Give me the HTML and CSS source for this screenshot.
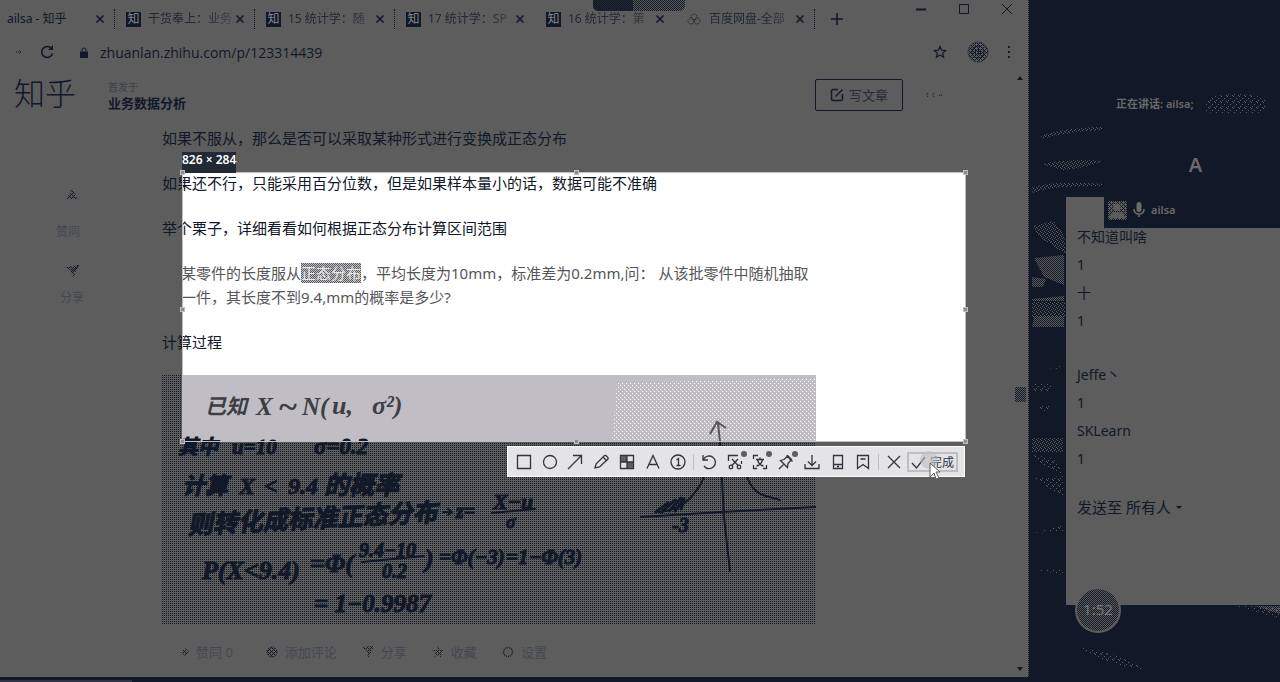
FILE: index.html
```html
<!DOCTYPE html>
<html lang="zh-CN">
<head>
<meta charset="utf-8">
<title>业务数据分析 - 知乎</title>
<link rel="stylesheet" href="styles.css">
</head>
<body class="desktop">
<svg class="defs" width="0" height="0" aria-hidden="true">
  <defs>
    <pattern id="grain" width="4" height="4" patternUnits="userSpaceOnUse"><path fill="#111827" d="M0 0h1v1H0zM2 0h1v1H2zM1 1h1v1H1zM0 2h1v1H0zM2 2h1v1H2zM3 3h1v1H3z"/></pattern>
    <pattern id="grainLight" width="4" height="4" patternUnits="userSpaceOnUse"><path fill="#111827" d="M0 0h1v1H0zM2 0h1v1H2zM0 2h1v1H0zM2 2h1v1H2z"/></pattern>
    <pattern id="spark" width="4" height="4" patternUnits="userSpaceOnUse"><path fill="#5d5d5d" d="M0 0h1v1H0zM2 1h1v1H2zM1 2h1v1H1zM3 3h1v1H3z"/></pattern>
    <pattern id="sparkThin" width="6" height="6" patternUnits="userSpaceOnUse"><path fill="#5d5d5d" d="M0 0h1v1H0zM3 2h1v1H3zM1 4h1v1H1zM5 5h1v1H5z"/></pattern>
    <pattern id="sparkDense" width="2" height="2" patternUnits="userSpaceOnUse"><path fill="#5d5d5d" d="M0 0h1v1H0zM1 1h1v1H1z"/></pattern>
    <pattern id="snow" width="4" height="4" patternUnits="userSpaceOnUse"><path fill="#fff" d="M0 0h1v1H0zM2 2h1v1H2z"/></pattern>
    <symbol id="cross" viewBox="0 0 10 10"><path d="M1.500 1.500l7 7M8.500 1.500l-7 7" stroke="currentColor" stroke-width="1.600"/></symbol>
  </defs>
</svg>
<div class="screen">
  <div class="browser">
    <div class="meeting-pill" aria-hidden="true"></div>
    <div class="tabstrip">
      <div class="tabs">
        <div class="tab tab-first"><span class="tab-title">ailsa - 知乎</span><button class="close" aria-label="关闭"><svg width="10" height="10"><use href="#cross"/></svg></button></div>
        <div class="tab"><span class="favicon">知</span><span class="tab-title faded">干货奉上：业务</span><button class="close" aria-label="关闭"><svg width="10" height="10"><use href="#cross"/></svg></button></div>
        <div class="tab"><span class="favicon">知</span><span class="tab-title faded">15 统计学：随</span><button class="close" aria-label="关闭"><svg width="10" height="10"><use href="#cross"/></svg></button></div>
        <div class="tab plain"><span class="favicon">知</span><span class="tab-title faded">17 统计学：SP</span><button class="close" aria-label="关闭"><svg width="10" height="10"><use href="#cross"/></svg></button></div>
        <div class="tab plain"><span class="favicon">知</span><span class="tab-title faded">16 统计学：第</span><button class="close" aria-label="关闭"><svg width="10" height="10"><use href="#cross"/></svg></button></div>
        <div class="tab"><svg class="cloud" width="16" height="14" viewBox="0 0 16 14" fill="none" stroke="#111827" stroke-dasharray="1 1"><circle cx="8" cy="5" r="3"/><circle cx="5" cy="9" r="3"/><circle cx="11" cy="9" r="3"/></svg><span class="tab-title faded">百度网盘-全部</span><button class="close" aria-label="关闭"><svg width="10" height="10"><use href="#cross"/></svg></button></div>
        <button class="new-tab" aria-label="新标签页"><svg width="14" height="14" viewBox="0 0 14 14"><path d="M7 1v12M1 7h12" stroke="#111827" stroke-width="1.600"/></svg></button>
      </div>
      <div class="window-buttons">
        <button aria-label="最小化"><svg width="12" height="12" viewBox="0 0 12 12"><path d="M1 6.500h10" stroke="#111827" stroke-width="2"/></svg></button>
        <button aria-label="最大化"><svg width="12" height="12" viewBox="0 0 12 12"><path d="M1.500 1.500h9v9h-9z" fill="none" stroke="#111827"/></svg></button>
        <button aria-label="关闭窗口"><svg width="12" height="12" viewBox="0 0 12 12"><path d="M1 1l10 10M11 1L1 11" stroke="#111827"/></svg></button>
      </div>
    </div>
    <div class="addressbar">
      <button class="forward" aria-label="前进"><svg width="8" height="8" viewBox="0 0 8 8"><path d="M1 4h6M4 2l2 2-2 2" fill="none" stroke="#111827" stroke-dasharray="1 1"/></svg></button>
      <button class="reload" aria-label="重新加载"><svg width="14" height="14" viewBox="0 0 14 14"><path d="M11.500 3.500A5.500 5.500 0 1 0 12.500 8.500" fill="none" stroke="#111827" stroke-width="1.600"/><path d="M13 0v5H8z" fill="#111827"/></svg></button>
      <svg class="lock" width="8" height="11" viewBox="0 0 8 11"><path d="M2 5V3a2 2 0 0 1 4 0v2" fill="none" stroke="#111827"/><path d="M0 4.500h8V11H0z" fill="#111827"/></svg>
      <input class="url" type="text" aria-label="网址" value="zhuanlan.zhihu.com/p/123314439">
      <button class="star" aria-label="收藏"><svg width="14" height="14" viewBox="0 0 14 14"><path d="M7 1.500l1.600 3.700 4 .3-3 2.700 1 4L7 10l-3.600 2.200 1-4-3-2.700 4-.3z" fill="none" stroke="#111827" stroke-width="1.200"/></svg></button>
      <button class="avatar" aria-label="账户"><svg width="22" height="22" viewBox="0 0 22 22"><circle cx="11" cy="11" r="10" fill="url(#grain)" stroke="#111827" stroke-dasharray="1 1"/><circle cx="11" cy="11" r="6" fill="none" stroke="#111827"/><path d="M8.500 8v6M11.500 8v6M13.500 9v4" stroke="#111827"/></svg></button>
      <button class="kebab" aria-label="菜单"><svg width="4" height="14" viewBox="0 0 4 14" fill="#111827"><path d="M1 1h2v2H1zM1 6h2v2H1zM1 11h2v2H1z"/></svg></button>
    </div>
    <main class="page">
      <div class="selection-area"></div>
      <header class="site-header">
        <a class="logo" href="#">知乎</a>
        <div class="column-name"><span class="published">首发于</span><a class="column-link" href="#">业务数据分析</a></div>
        <button class="write"><svg width="14" height="14" viewBox="0 0 14 14" fill="none" stroke="#111827" stroke-width="1.500"><path d="M8 1.500H3a1.500 1.500 0 0 0-1.500 1.500v8A1.500 1.500 0 0 0 3 12.500h8a1.500 1.500 0 0 0 1.500-1.500V6"/><path d="M5.500 8.500L12.500 1.500"/></svg>写文章</button>
        <button class="more" aria-label="更多"><svg width="16" height="6" viewBox="0 0 16 6"><path d="M2 1L0.500 3 2 5M8 1L6.500 3 8 5M13 4l1.500-2L16 4" fill="none" stroke="#111827" stroke-dasharray="1 1"/></svg></button>
      </header>
      <div class="content">
        <aside class="rail">
          <button class="vote"><svg width="12" height="10" viewBox="0 0 12 10"><path d="M6 0l6 10H0z" fill="url(#grain)"/></svg><span class="vote-text">赞同</span></button>
          <button class="share"><svg width="14" height="14" viewBox="0 0 14 14"><path d="M0 2l14-2-6 13-2-7z" fill="url(#grain)"/><path d="M6 7l8-7" stroke="#111827"/></svg><span>分享</span></button>
        </aside>
        <article class="article">
          <p>如果不服从，那么是否可以采取某种形式进行变换成正态分布</p>
          <p>如果还不行，只能采用百分位数，但是如果样本量小的话，数据可能不准确</p>
          <p>举个栗子，详细看看如何根据正态分布计算区间范围</p>
          <blockquote>某零件的长度服从<mark>正态分布</mark>，平均长度为10mm，标准差为0.2mm,问： 从该批零件中随机抽取一件，其长度不到9.4,mm的概率是多少?</blockquote>
          <p>计算过程</p>
          <svg class="notes" viewBox="0 0 654 250" role="img" aria-label="手写计算过程">
            <rect width="654" height="250" fill="#5d5d5d"/><rect width="654" height="250" fill="url(#grainLight)"/>
            <rect x="20" width="634" height="66" fill="#c0bec4"/><path d="M455 8L654 3v63H450z" fill="url(#snow)"/>
            <g class="hand" fill="#3d3f43">
              <text x="43" y="39" font-size="21">已知</text><text x="94" y="40" font-size="25">X</text>
              <text x="116" y="43" font-size="34">~</text><text x="140" y="40" font-size="25">N(</text><text x="170" y="39" font-size="26">u,</text><text x="210" y="39" font-size="26">σ²)</text>
            </g>
            <g class="hand ink" fill="#111827">
              <text x="16" y="79" font-size="20">其中</text><text x="70" y="79" font-size="21">u=10</text><text x="152" y="79" font-size="23">σ=0.2</text>
              <text x="20" y="119" font-size="23">计算</text><text x="77" y="119" font-size="24">X</text><text x="102" y="119" font-size="24">&lt;</text><text x="126" y="119" font-size="24">9.4</text><text x="162" y="119" font-size="25">的概率</text>
              <text x="26" y="159" font-size="25" transform="rotate(-3 26 159)">则转化成标准正态分布</text><text x="294" y="143" font-size="20">z=</text>
              <text x="331" y="134" font-size="22">X−u</text><text x="344" y="153" font-size="18">σ</text>
              <text x="40" y="204" font-size="26">P(X&lt;9.4)</text><text x="148" y="197" font-size="26">=Φ(</text>
              <text x="197" y="182" font-size="20">9.4−10</text><text x="220" y="203" font-size="20">0.2</text><text x="263" y="192" font-size="26">)</text>
              <text x="277" y="189" font-size="21">=Φ(−3)</text><text x="344" y="189" font-size="21">=1−Φ(3)</text>
              <text x="152" y="237" font-size="25">= 1−0.9987</text>
              <text x="510" y="157" font-size="20">-3</text>
            </g>
            <g fill="none" stroke="#111827" stroke-width="2" stroke-linecap="round">
              <path d="M330 138l43-4M200 187l62-6M479 142l80-5 95-5M558 66l4 76 6 54"/>
              <path d="M281 137h8M286 134l4 3-4 3"/>
              <path d="M497 137q24-2 37-21 10-12 12-32M582 84q2 32 22 37l14 4"/>
              <path d="M494 137l12-9M500 137l13-12M507 136l12-13M513 136l9-12M519 134l3-8" stroke-width="3"/>
            </g>
            <path d="M558 67l-2-19M548 59l7-12 9 6" fill="none" stroke="#55565a" stroke-width="2"/>
          </svg>
          <div class="actions">
            <button class="agree"><svg width="8" height="8" viewBox="0 0 8 8"><path d="M4 0l4 4-4 4-4-4z" fill="url(#grain)"/></svg>赞同 0</button>
            <button><svg width="12" height="12" viewBox="0 0 12 12"><circle cx="6" cy="6" r="5" fill="url(#grain)" stroke="#111827" stroke-dasharray="1 1"/></svg>添加评论</button>
            <button><svg width="12" height="12" viewBox="0 0 12 12"><path d="M0 1l12-1-6 12-1-7z" fill="url(#grain)"/></svg>分享</button>
            <button><svg width="12" height="12" viewBox="0 0 12 12"><path d="M6 0l1.600 4H12L8.500 7 10 12 6 9l-4 3 1.500-5L0 4h4.400z" fill="url(#grain)"/></svg>收藏</button>
            <button><svg width="12" height="12" viewBox="0 0 12 12"><circle cx="6" cy="6" r="4.500" fill="none" stroke="#111827" stroke-width="1.500" stroke-dasharray="1 1"/></svg>设置</button>
          </div>
        </article>
      </div>
      <div class="scrollbar" aria-hidden="true"><i class="arrow-up"></i><i class="thumb"></i><i class="arrow-down"></i></div>
      <div class="selection-frame">
        <span class="size-label">826 × 284</span>
        <i class="handle top left"></i><i class="handle top center"></i><i class="handle top right"></i>
        <i class="handle middle left"></i><i class="handle middle right"></i>
        <i class="handle bottom left"></i><i class="handle bottom center"></i><i class="handle bottom right"></i>
        <div class="capture-bar" role="toolbar" aria-label="截图工具">
          <button aria-label="矩形"><svg viewBox="0 0 16 16"><path d="M1.500 1.500h13v13h-13z"/></svg></button>
          <button aria-label="椭圆"><svg viewBox="0 0 16 16"><circle cx="8" cy="8" r="6.500"/></svg></button>
          <button aria-label="箭头"><svg viewBox="0 0 16 16"><path d="M1 15L14 2M6 1.500h8.500V10"/></svg></button>
          <button aria-label="画笔"><svg viewBox="0 0 16 16"><path d="M2 14l1-4 8.500-8.500q1-.5 2.500 1t1 2.500L6.500 13zM10 3l3 3"/></svg></button>
          <button aria-label="马赛克"><svg viewBox="0 0 16 16"><path d="M1.500 1.500h13v13h-13z"/><path d="M2 2h6v6H2zM8 8h6v6H8z" fill="#5d5d5d" stroke="none"/><path d="M8 2v12M2 8h12"/></svg></button>
          <button aria-label="文字"><svg viewBox="0 0 16 16"><path d="M2 14.500L8 1.500l6 13M4 10.500h8"/></svg></button>
          <button aria-label="序号"><svg viewBox="0 0 16 16"><circle cx="8" cy="8" r="7"/><path d="M6.500 6L8.500 4.500v7M6.500 11.500h4"/></svg></button>
          <span class="divider"></span>
          <button aria-label="撤销"><svg viewBox="0 0 16 16"><path d="M2 1v5h5M2.500 5.500A6.300 6.300 0 1 1 3 12"/></svg></button>
          <button aria-label="裁剪"><svg viewBox="0 0 16 16"><path d="M1.500 7V1.500H11M14.500 7v3M5 5l6.500 7M11 5l-6.500 7"/><circle cx="4" cy="13" r="1.800"/><circle cx="12" cy="13" r="1.800"/></svg><i class="badge"></i></button>
          <button aria-label="翻译"><svg viewBox="0 0 16 16"><path d="M1.500 5V1.500H6M1.500 11v3.500H5M11 14.500h3.500V11M4 5.500h8M8 3.500v2M10.500 6Q9 11 4.500 12M5.500 6q1.500 5 6 6"/></svg><i class="badge"></i></button>
          <button aria-label="钉住"><svg viewBox="0 0 16 16"><path d="M1 15l5-5M2.500 6.500l7 7 .5-4 3.500-4-3.500-3.500-4 3.500zM8.500 1.500l6 6"/></svg><i class="badge"></i></button>
          <button aria-label="下载"><svg viewBox="0 0 16 16"><path d="M8 1v10M4 7.500l4 4 4-4M1 10v4.500h14V10"/></svg></button>
          <button aria-label="发送到手机"><svg viewBox="0 0 16 16"><path d="M3.500 1.500h9v13h-9zM3.500 10.500h9M7 12.500h2"/></svg></button>
          <button aria-label="收藏截图"><svg viewBox="0 0 16 16"><path d="M2.500 1.500h11v13L8 10.500l-5.500 4zM5.500 5h5"/></svg></button>
          <span class="divider"></span>
          <button aria-label="取消"><svg viewBox="0 0 16 16"><path d="M2 2l12 12M14 2L2 14"/></svg></button>
          <button class="done"><svg viewBox="0 0 16 16"><path d="M1 9l4.500 5L14 3"/></svg>完成</button>
          <svg class="pointer" viewBox="0 0 20 30"><circle cx="9" cy="9" r="9" fill="#c0bec4" fill-opacity=".6"/><path d="M10 12v14l4-4 2 6 3-1-3-6h4z" fill="#fff" stroke="#5d5d5d"/></svg>
        </div>
      </div>
    </main>
  </div>
  <aside class="side">
    <svg class="wallpaper" viewBox="0 0 251 677" preserveAspectRatio="xMinYMin slice" aria-hidden="true">
      <g fill="url(#spark)">
        <path d="M12 136q20-8 62-9v3q-40 2-60 9zM12 164q30-6 62-3-20 8-40 9zM2 188q20-8 72-4v2q-50-1-70 7z"/>
        <path d="M3 226l22-5 10 14 2 20-26-18zM3 302h33v15H3zM3 438h31v14H3z"/>
      </g>
      <g fill="url(#sparkThin)">
        <path d="M14 368l18-2v3zM3 384h20v8H5zM8 406h17l-10 6zM5 455l20 4 10 16-26-12zM5 478l30-2v22zM3 533l32-8v6zM8 570h26v5z"/>
        <path d="M52 648q30 2 68 22-40-4-66-20zM65 668l30 9zM208 606h43v13z"/>
        <path d="M178 98q30-8 58 0v14q-30 4-60 0z"/>
      </g>
      <path fill="url(#sparkDense)" d="M5 258l30-3v30l-20-8-8-15zM3 277l14 2-3 8H3zM3 299l32-3v5H3zM5 316h30v11H3zM225 606h26v8z"/>
    </svg>
    <section class="chat">
      <ul class="messages">
        <li>不知道叫啥</li><li>1</li><li>十</li><li>1</li><li class="sender">Jeffe丶</li><li>1</li><li>SKLearn</li><li>1</li>
      </ul>
      <div class="send-to"><label for="recipient">发送至</label><select id="recipient"><option>所有人</option></select><svg width="6" height="3" viewBox="0 0 6 3"><path d="M0 0h6L3 3z" fill="#111827"/></svg></div>
    </section>
    <section class="meeting">
      <p class="speaking">正在讲话: ailsa;</p>
      <div class="speaker">A</div>
      <div class="member">
        <svg width="19" height="19" viewBox="0 0 19 19"><rect width="19" height="19" fill="#5d5d5d"/><rect width="19" height="19" fill="url(#grain)"/><circle cx="9" cy="6" r="3.500" fill="#5d5d5d"/><path d="M2 17q0-6 7-6t8 6z" fill="#5d5d5d"/></svg>
        <svg width="12" height="16" viewBox="0 0 12 16"><rect x="3.500" width="5" height="10" rx="2.500" fill="#6a6a6a"/><path d="M1 7q0 5 5 5t5-5M6 12v3" fill="none" stroke="#6a6a6a" stroke-width="1.500"/></svg>
        <span>ailsa</span>
      </div>
    </section>
    <div class="timer">1:52</div>
  </aside>
</div>
<footer class="taskbar" aria-hidden="true"></footer>
</body>
</html>
```
FILE: styles.css
```css
:root {
  --ink: #111827;
  --dim: #5d5d5d;
  --lilac: #c0bec4;
}
* { box-sizing: border-box; }
body {
  margin: 0;
  min-height: 100vh;
  display: flex;
  flex-direction: column;
  background: var(--ink);
  color: var(--ink);
  font-family: "Noto Sans", "Noto Sans CJK SC", sans-serif;
  font-size: 13px;
  overflow: hidden;
}
.defs { position: absolute; }
button, input, select {
  font: inherit;
  color: inherit;
  background: none;
  border: 0;
  padding: 0;
  margin: 0;
}
button { display: flex; align-items: center; justify-content: center; }
a { color: inherit; text-decoration: none; }
svg { flex: none; }
.screen { flex: 1; display: flex; }
.browser {
  flex: 1;
  min-width: 0;
  display: flex;
  flex-direction: column;
  position: relative;
  background: var(--dim);
  border-right: 1px dotted var(--ink);
}
.meeting-pill {
  position: absolute;
  left: 593px;
  top: 0;
  width: 92px;
  height: 11px;
  border-radius: 0 0 5px 5px;
  background:
    linear-gradient(90deg, #111827cc 40px, transparent 0),
    repeating-conic-gradient(#111827 0 25%, #5d5d5d 0 50%) 0 0 / 2px 2px;
}

/* Tabs */
.tabstrip { display: flex; justify-content: space-between; height: 36px; }
.tabs { display: flex; align-items: center; padding-top: 2px; }
.tab {
  width: 140px;
  height: 20px;
  display: flex;
  align-items: center;
  padding: 0 9px 0 11px;
  border-right: 1px dotted var(--ink);
}
.tab-first { width: 115px; padding-left: 7px; }
.plain { border-right-color: transparent; }
.favicon {
  width: 15px;
  height: 15px;
  margin-right: 7px;
  background: var(--ink);
  color: #8a8a8a;
  font-size: 12px;
  line-height: 14px;
  text-align: center;
}
.cloud { margin-right: 7px; }
.tab-title { flex: 1; min-width: 0; overflow: hidden; white-space: nowrap; font-size: 12px; line-height: 20px; }
.faded { color: #222834; mask-image: linear-gradient(90deg, #000 70%, #0006); }
.close { width: 10px; height: 10px; margin-left: 3px; }
.new-tab { width: 44px; height: 20px; }
.window-buttons { display: flex; height: 18px; }
.window-buttons button { width: 43px; }

/* Address bar */
.addressbar { display: flex; align-items: center; height: 32px; padding: 0 17px 0 15px; }
.reload { margin-left: 17px; }
.lock { margin: 0 12px 0 26px; }
.url { flex: 1; min-width: 0; font-family: "Open Sans", sans-serif; font-size: 14px; }
.star { margin-right: 20px; }
.avatar { margin-right: 18px; }

/* Page */
.page { flex: 1; position: relative; }
.site-header, .content { position: relative; z-index: 1; }
.selection-area, .selection-frame {
  position: absolute;
  left: 182px;
  right: 62px;
  top: 104px;
  height: 270px;
}
.selection-area { background: #fff; }
.site-header { display: flex; align-items: center; height: 53px; padding: 0 86px 0 14px; }
.logo { font-size: 31px; font-weight: 300; line-height: 40px; width: 94px; padding-bottom: 4px; }
.column-name { flex: 1; display: flex; flex-direction: column; padding-top: 2px; }
.published { font-size: 10px; line-height: 16px; color: #3c4048; }
.column-link { font-size: 13px; line-height: 17px; font-weight: 700; }
.write {
  gap: 5px;
  width: 88px;
  height: 32px;
  border: 1px solid var(--ink);
  border-radius: 2px;
  color: #262c37;
}
.more { margin-left: 23px; }
.content { display: flex; padding-top: 5px; }
.rail { width: 162px; padding: 63px 36px 0 18px; display: flex; flex-direction: column; align-items: center; }
.rail button { flex-direction: column; color: #444850; font-size: 12px; line-height: 18px; }
.vote { gap: 24px; }
.vote-text { padding-right: 8px; }
.share { gap: 10px; margin-top: 24px; }
.article { flex: 1; max-width: 654px; font-size: 15px; line-height: 24px; }
.article p { margin: 0 0 21px; }
.article blockquote {
  margin: 0 0 21px;
  padding-left: 19px;
  color: #55565a;
}
.article mark {
  background: repeating-conic-gradient(#c0bec4 0 25%, #5d5d5d 0 50%) 0 0 / 2px 2px;
  color: #e8e8ea;
}
.notes { display: block; width: 100%; height: auto; }
.hand { font-family: "Liberation Serif", "Noto Sans CJK SC", serif; font-style: italic; font-weight: 700; }
.ink { stroke: var(--ink); stroke-width: 1px; }
.actions { display: flex; gap: 25px; padding: 15px 0 0 19px; }
.actions button { gap: 7px; font-size: 13px; line-height: 24px; color: #444850; }
.actions .agree { margin-right: 8px; }
.scrollbar {
  position: absolute;
  right: 0;
  top: 8px;
  bottom: 6px;
  width: 16px;
  display: flex;
  flex-direction: column;
  align-items: center;
  justify-content: space-between;
}
.arrow-up, .arrow-down { border: 3px solid transparent; }
.arrow-up { border-top: 0; border-bottom: 4px solid var(--ink); }
.arrow-down { border-bottom: 0; border-top: 4px solid var(--ink); }
.thumb { width: 11px; height: 15px; margin-top: 42px; background: repeating-conic-gradient(#111827 0 25%, #5d5d5d 0 50%) 0 0 / 2px 2px; }

/* Screen capture */
.selection-frame { z-index: 2; border: 1px solid var(--lilac); }
.size-label {
  position: absolute;
  left: -1px;
  bottom: 100%;
  padding-bottom: 5px;
  background: #222834;
  color: #fff;
  font-size: 12px;
  font-weight: 600;
  line-height: 16px;
  white-space: nowrap;
}
.handle { position: absolute; width: 5px; height: 5px; background: #8d8c91; border: 1px solid var(--lilac); }
.top { top: -3px; }
.middle { top: 50%; }
.bottom { bottom: -3px; }
.left { left: -3px; }
.center { left: 50%; }
.right { right: -3px; }
.capture-bar {
  position: absolute;
  right: 0;
  top: calc(100% + 5px);
  width: 458px;
  height: 31px;
  padding: 0 6px 0 3px;
  display: flex;
  align-items: center;
  background: #e4e3e6;
  border: 1px solid #fff;
}
.capture-bar button { flex: 1; height: 24px; position: relative; }
.capture-bar button svg { width: 16px; height: 16px; fill: none; stroke: #30343c; stroke-width: 1.300; }
.divider { width: 1px; height: 16px; margin: 0 2px; background: var(--lilac); }
.badge { position: absolute; right: 1px; top: 1px; width: 6px; height: 6px; border-radius: 50%; background: var(--dim); }
.capture-bar .done { flex: none; width: 51px; height: 20px; gap: 3px; border: 2px solid var(--lilac); color: #30343c; font-size: 12px; }
.pointer { position: absolute; right: 24px; top: 4px; width: 20px; height: 30px; }

/* Side */
.side { width: 251px; position: relative; display: flex; flex-direction: column; }
.wallpaper { position: absolute; left: 0; top: 0; width: 100%; height: 100%; }
.chat {
  position: relative;
  margin: 197px 0 72px 37px;
  padding: 26px 11px 0;
  flex: 1;
  background: var(--dim);
}
.messages { margin: 0; padding: 0; list-style: none; font-size: 14px; line-height: 28px; }
.sender { margin-top: 26px; }
.send-to { display: flex; align-items: center; gap: 4px; margin-top: 22px; font-size: 15px; line-height: 24px; }
.send-to select { appearance: none; }
.meeting {
  position: absolute;
  left: 75px;
  right: 0;
  top: 0;
  height: 228px;
  display: flex;
  flex-direction: column;
  color: #6a6a6a;
  background: linear-gradient(var(--ink), var(--ink)) 0 113px / 100% 115px no-repeat;
}
.speaking { margin: 94px 0 0 12px; font-size: 11px; font-weight: 600; line-height: 20px; }
.speaker { margin-top: 36px; padding-left: 7px; text-align: center; font-size: 20px; font-weight: 600; line-height: 30px; }
.member { display: flex; align-items: center; gap: 6px; margin: auto 0 8px 4px; font-size: 11px; font-weight: 600; line-height: 20px; }
.timer {
  position: absolute;
  left: 46px;
  bottom: 44px;
  width: 46px;
  height: 46px;
  border-radius: 50%;
  border: 2px solid var(--dim);
  background: repeating-conic-gradient(#111827 0 25%, #5d5d5d 0 50%) 0 0 / 2px 2px;
  color: #777;
  font-size: 15px;
  line-height: 40px;
  text-align: center;
}
.taskbar { height: 5px; background: linear-gradient(90deg, #30353f 132px, transparent 0) 0 3px / 100% 2px no-repeat; }
```
